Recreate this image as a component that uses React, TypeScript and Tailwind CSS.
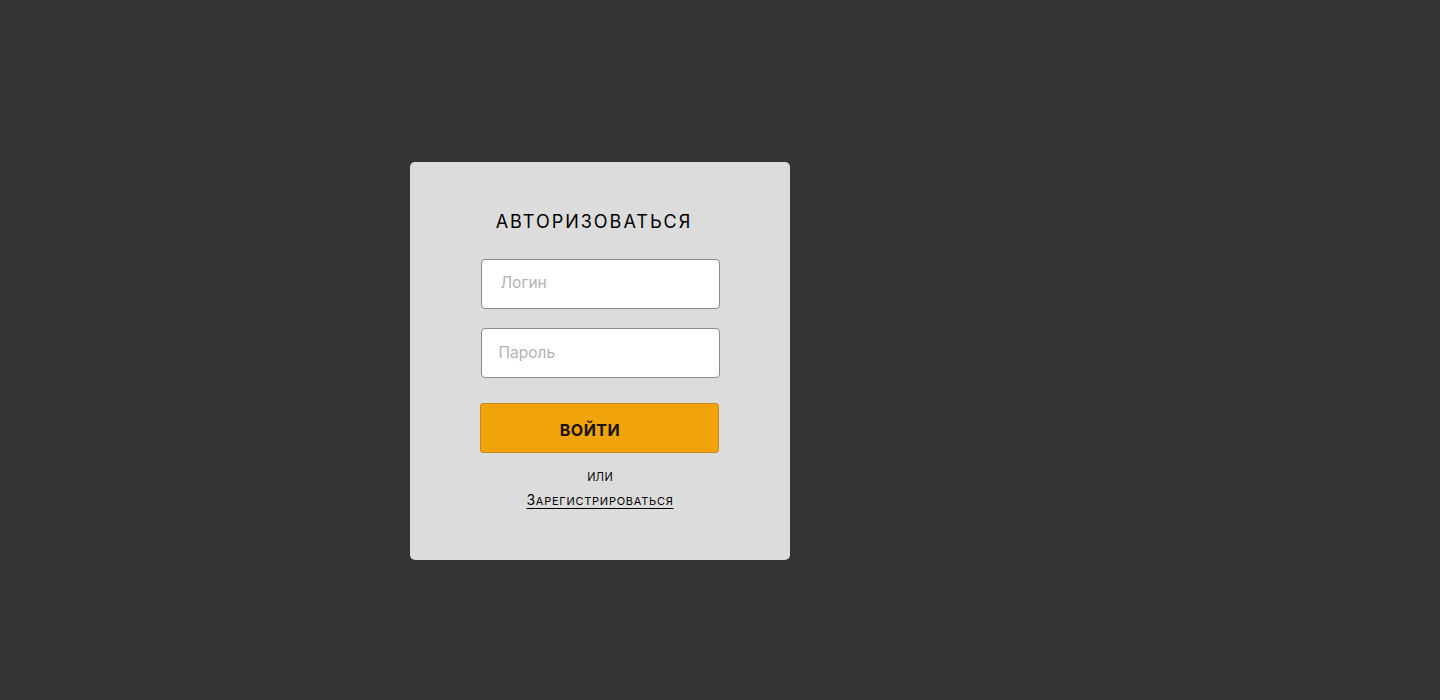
export default function App() {
  return (
    <div className="h-[700px] w-full bg-[#333333] pl-[410px] pt-[162px] font-['Inter','Roboto',sans-serif]">
      <div className="flex h-[398px] w-[380px] flex-col items-center rounded-[5px] bg-[#dcdcdc] pt-[48px]">
        {/* Title */}
        <h1 className="mr-[12px] text-[18px] leading-[24px] font-normal tracking-[2px] text-black">
          АВТОРИЗОВАТЬСЯ
        </h1>

        {/* Fields */}
        <input
          type="text"
          placeholder="Логин"
          className="mt-[25px] h-[50px] w-[239px] rounded-[4px] border border-[#8a8a8a] bg-white px-[19px] pb-[3px] text-[15.5px] text-black outline-none placeholder:text-[#b3b3b3]"
        />
        <input
          type="password"
          placeholder="Пароль"
          className="mt-[19px] h-[50px] w-[239px] rounded-[4px] border border-[#8a8a8a] bg-white px-[17px] pb-[2px] text-[15.5px] text-black outline-none placeholder:text-[#b3b3b3]"
        />

        {/* Submit */}
        <button
          type="button"
          className="mt-[25px] mr-[2px] h-[50px] w-[239px] rounded-[3px] border border-[#c58a1c] bg-[#f0a30a] pt-[3px] pr-[18px] text-[16px] font-bold tracking-[0.5px] text-[#1a1204]"
        >
          ВОЙТИ
        </button>

        <span className="mt-[13px] text-[15px] leading-[20px] font-light text-black">или</span>
        <a
          href="#"
          className="mt-[4px] text-[14px] leading-[20px] tracking-[0.75px] text-black underline decoration-1 underline-offset-[3px]"
        >
          З<span className="text-[11px]">АРЕГИСТРИРОВАТЬСЯ</span>
        </a>
      </div>
    </div>
  );
}
